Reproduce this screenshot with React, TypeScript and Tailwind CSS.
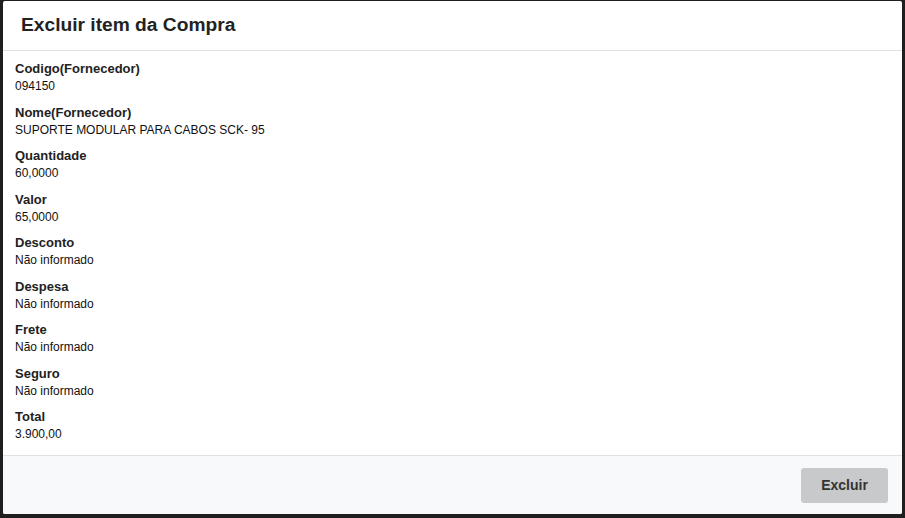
const fields: { label: string; value: string }[] = [
  { label: "Codigo(Fornecedor)", value: "094150" },
  { label: "Nome(Fornecedor)", value: "SUPORTE MODULAR PARA CABOS SCK- 95" },
  { label: "Quantidade", value: "60,0000" },
  { label: "Valor", value: "65,0000" },
  { label: "Desconto", value: "Não informado" },
  { label: "Despesa", value: "Não informado" },
  { label: "Frete", value: "Não informado" },
  { label: "Seguro", value: "Não informado" },
  { label: "Total", value: "3.900,00" },
];

export default function App() {
  return (
    <div className="w-[905px] h-[518px] bg-[#1f1f1f] pt-px pl-[3px] pr-[3px] pb-[4px] font-['Liberation_Sans',Arial,sans-serif]">
      <div className="h-full flex flex-col bg-white rounded-[2px] overflow-hidden">
        <header className="h-[50px] shrink-0 flex items-center px-[18px] border-b border-[#dee2e6]">
          <h1 className="text-[19.2px] font-bold text-[#222]">Excluir item da Compra</h1>
        </header>

        <div className="flex-1 flex flex-col gap-[9.5px] pt-[9px] px-[12px]">
          {fields.map((f) => (
            <div key={f.label} className="flex flex-col">
              <span className="text-[13px] leading-[18px] font-bold text-[#222]">{f.label}</span>
              <span className="text-[12px] leading-[16px] text-[#111]">{f.value}</span>
            </div>
          ))}
        </div>

        <footer className="h-[59px] shrink-0 flex items-center justify-end pr-[14px] bg-[#f8f9fa] border-t border-[#dee2e6]">
          <button className="w-[87px] h-[35px] rounded-[3px] bg-[#c8c9ca] text-[14px] font-bold text-[#333]">
            Excluir
          </button>
        </footer>
      </div>
    </div>
  );
}
